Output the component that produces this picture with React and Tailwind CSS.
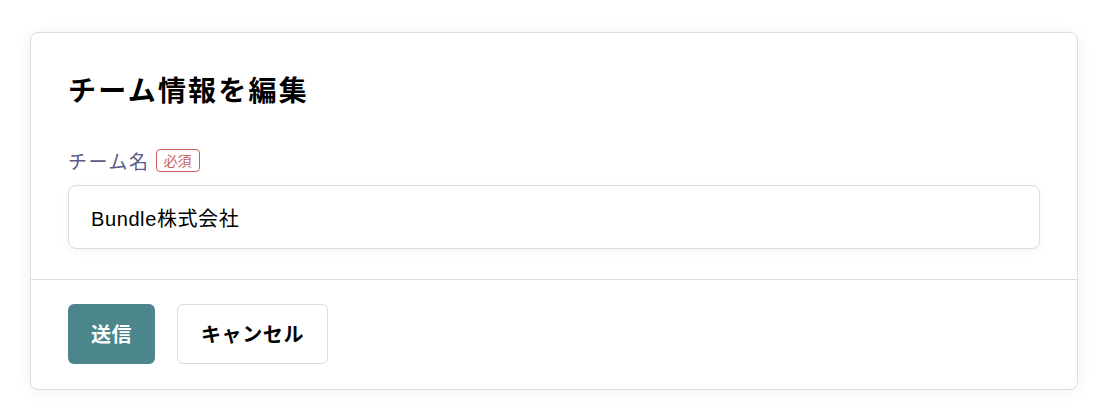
import React, { useState } from 'react';

const App = () => {
    const [teamName, setTeamName] = useState('Bundle株式会社');

    return (
        <div className="min-h-screen bg-white pl-[30px] pt-[32px] font-['Noto_Sans_CJK_JP','Noto_Sans',sans-serif] text-black">
            <div className="w-[1048px] bg-white border border-[#dcdcdc] rounded-lg shadow-[0_2px_16px_rgba(0,0,0,0.06)]">
                <div className="px-[37px] pt-[36px] pb-[30px]">
                    <h1 className="text-[28px] font-bold leading-[40px] mb-[38px] tracking-[0.08em]">チーム情報を編集</h1>

                    <div className="flex items-center gap-[6px] mb-[11px]">
                        <label className="text-[19px] leading-[27px] tracking-[0.08em] text-[#5b5a86]">チーム名</label>
                        <span className="text-[14px] leading-[21px] px-[7px] border border-[#c9605c] text-[#c9605c] rounded-[4px]">必須</span>
                    </div>

                    <input
                        type="text"
                        value={teamName}
                        onChange={(e) => setTeamName(e.target.value)}
                        className="w-full h-[64px] px-[22px] text-[20px] tracking-[0.03em] border border-[#dcdcdc] rounded-lg outline-none shadow-[0_2px_10px_rgba(0,0,0,0.05)] font-['Liberation_Sans','Noto_Sans_CJK_JP',sans-serif]"
                    />
                </div>

                <div className="border-t border-[#dcdcdc] px-[37px] pt-[24px] pb-[25px] flex gap-[22px]">
                    <button className="w-[87px] h-[60px] bg-[#4a868c] text-white text-[20px] tracking-[0.03em] font-bold rounded-md">
                        送信
                    </button>
                    <button className="w-[151px] h-[60px] bg-white border border-[#dcdcdc] text-[20px] tracking-[0.03em] font-bold rounded-md">
                        キャンセル
                    </button>
                </div>
            </div>
        </div>
    );
};

export default App;
